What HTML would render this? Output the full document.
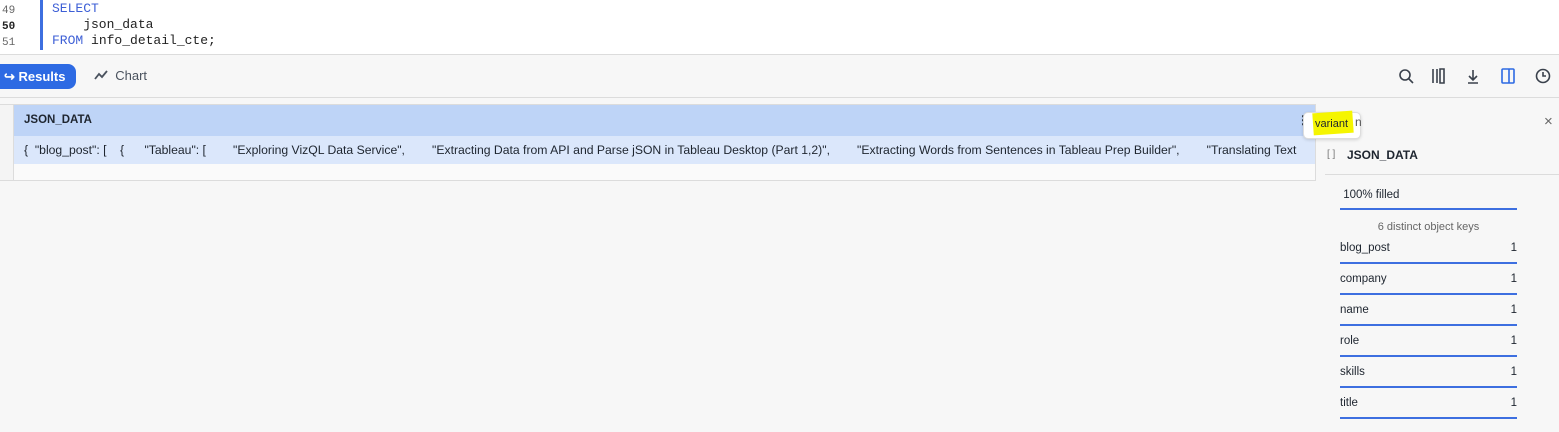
<!DOCTYPE html>
<html><head><style>
*{margin:0;padding:0;box-sizing:border-box}
body{width:1559px;height:432px;overflow:hidden;background:#f7f7f7;font-family:"Liberation Sans",sans-serif;position:relative;color:#1e252f}
.a{position:absolute}
.mono{font-family:"Liberation Mono",monospace;font-size:13px}
.key{position:absolute;left:1340px;width:177px;height:22px;border-bottom:2px solid #3d6fe0;font-size:11.5px;color:#1e252f}
.key span{position:absolute;right:0;top:0}
</style></head><body>
<div class="a" style="left:0;top:0;width:1559px;height:55px;background:#fff;border-bottom:1px solid #dcdcdc"></div>
<div class="a" style="left:40px;top:0;width:3px;height:50px;background:#3d6fe0"></div>
<div class="a mono" style="left:2px;top:3px;color:#666;font-size:11px;line-height:16px">49<br><b style="color:#222">50</b><br>51</div>
<div class="a mono" style="left:52px;top:1px;line-height:16px;color:#222"><span style="color:#3d5fd6">SELECT</span><br>&nbsp;&nbsp;&nbsp;&nbsp;json_data<br><span style="color:#3d5fd6">FROM</span> info_detail_cte;</div>
<div class="a" style="left:-10px;top:64px;width:86px;height:25px;background:#2d6ae3;border-radius:8px;color:#fff;font-weight:bold;font-size:13px;line-height:25px;padding-left:14px">↪ Results</div>
<div class="a" style="left:94px;top:68px;font-size:13px;color:#4a525e"><svg width="14" height="12" style="vertical-align:-1px"><path d="M1 10 L5 5 L8 8 L13 2" stroke="#4a525e" stroke-width="1.8" fill="none"/></svg>&nbsp; Chart</div>
<svg class="a" style="left:1395px;top:66px" width="160" height="20" fill="none" stroke="#3a414c" stroke-width="1.6">
<circle cx="10" cy="9" r="5"/><path d="M14 13l4 4"/>
<path d="M38 3v14M42 3v14M45 3h4v14h-4z"/>
<path d="M78 4v9M74 10l4 4 4-4M73 17h10"/>
<rect x="107" y="3" width="12" height="14" rx="1" stroke="#2d6ae3"/><path d="M114 3v14" stroke="#2d6ae3"/>
<circle cx="148" cy="10" r="6.5"/><path d="M148 6v4h3"/>
</svg>
<div class="a" style="left:0;top:97px;width:1559px;height:1px;background:#dcdcdc"></div>
<div class="a" style="left:0;top:104px;width:1316px;height:77px;background:#fafafa;border:1px solid #dcdcdc;border-left:none"></div>
<div class="a" style="left:0;top:105px;width:14px;height:75px;border-right:1px solid #dcdcdc;background:#f4f4f4"></div>
<div class="a" style="left:14px;top:105px;width:1301px;height:31px;background:#bed4f7;font-weight:bold;font-size:11.5px;line-height:31px;padding-left:10px">JSON_DATA</div>
<div class="a" style="left:1297px;top:113px;font-weight:bold;font-size:12px">⋮</div>
<div class="a" style="left:14px;top:136px;width:1301px;height:28px;background:#dbe7fb;font-size:12.2px;line-height:28px;padding-left:10px;white-space:pre;overflow:hidden">{  "blog_post": [    {      "Tableau": [        "Exploring VizQL Data Service",        "Extracting Data from API and Parse jSON in Tableau Desktop (Part 1,2)",        "Extracting Words from Sentences in Tableau Prep Builder",        "Translating Text</div>
<div class="a" style="left:1303px;top:112px;width:58px;height:27px;background:#fff;border:1px solid #ddd;border-radius:5px;box-shadow:0 1px 3px rgba(0,0,0,.15)"></div>
<div class="a" style="left:1313px;top:112px;width:40px;height:22px;background:#f5f500;transform:rotate(-4deg)"></div>
<div class="a" style="left:1315px;top:118px;font-size:11px">variant</div>
<div class="a" style="left:1355px;top:115px;font-size:12px;color:#555">n</div>
<div class="a" style="left:1544px;top:113px;font-size:15px;color:#666">×</div>
<div class="a" style="left:1327px;top:149px;font-size:10px;color:#777">[ ]</div>
<div class="a" style="left:1347px;top:148px;font-size:12px;font-weight:bold">JSON_DATA</div>
<div class="a" style="left:1325px;top:174px;width:234px;height:1px;background:#dcdcdc"></div>
<div class="a" style="left:1340px;top:189px;width:177px;height:21px;border-bottom:2px solid #3d6fe0;font-size:11.5px">&nbsp;100% filled</div>
<div class="a" style="left:1340px;top:221px;width:177px;text-align:center;font-size:11px;color:#666">6 distinct object keys</div>
<div class="key" style="top:242px">blog_post<span>1</span></div>
<div class="key" style="top:273px">company<span>1</span></div>
<div class="key" style="top:304px">name<span>1</span></div>
<div class="key" style="top:335px">role<span>1</span></div>
<div class="key" style="top:366px">skills<span>1</span></div>
<div class="key" style="top:397px">title<span>1</span></div>
</body></html>
